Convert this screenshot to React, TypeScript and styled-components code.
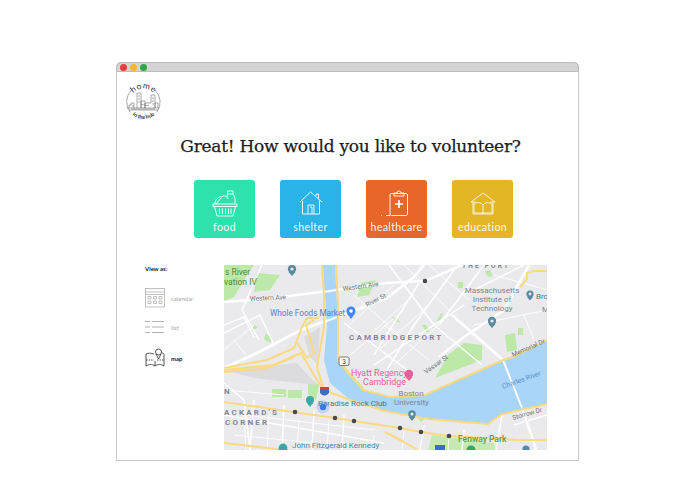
import styled, { createGlobalStyle } from 'styled-components';

const GlobalStyle = createGlobalStyle`
  html, body { margin: 0; padding: 0; background: #fff; }
  body { font-family: "Lato", "Liberation Sans", sans-serif; }
`;

const Page = styled.div`
  width: 695px;
  height: 494px;
  box-sizing: border-box;
  padding: 62px 0 0 116px;
  overflow: hidden;
`;

const BrowserWindow = styled.div`
  width: 463px;
  height: 399px;
  box-sizing: border-box;
  border: 1px solid #c9c9c9;
  border-top: 0;
  border-radius: 5px 5px 0 0;
  display: flex;
  flex-direction: column;
`;

const TitleBar = styled.div`
  height: 8px;
  margin: 0 -1px;
  flex: none;
  background: #d4d4d4;
  border: 1px solid #bdbdbd;
  border-radius: 5px 5px 0 0;
  display: flex;
  align-items: center;
  gap: 3px;
  padding-left: 3px;
`;

const Dot = styled.span<{ $color: string }>`
  width: 7px;
  height: 7px;
  border-radius: 50%;
  background: ${(p) => p.$color};
`;

const LogoWrap = styled.div`
  height: 40px;
  padding: 9px 0 0 8px;
`;

const Title = styled.h1`
  margin: 14px 0 0;
  padding-left: 6px;
  text-align: center;
  font-family: "DejaVu Serif", "Liberation Serif", serif;
  font-weight: 400;
  font-size: 17px;
  letter-spacing: -0.25px;
  -webkit-text-stroke: 0.25px #1c1c1c;
  line-height: 22px;
  color: #1c1c1c;
`;

const Cards = styled.div`
  display: flex;
  margin: 23px 0 0 77px;
  gap: 25px;
`;

const Card = styled.div<{ $bg: string }>`
  width: 61px;
  height: 58px;
  border-radius: 3px;
  background: ${(p) => p.$bg};
  display: flex;
  flex-direction: column;
  align-items: center;
  color: #fff;
  svg { margin-top: 10px; }
`;

const CardLabel = styled.span`
  margin-top: 3px;
  font-size: 10.6px;
  line-height: 14px;
  letter-spacing: 0.35px;
  white-space: nowrap;
  opacity: 0.92;
`;

const Lower = styled.div`
  display: flex;
  margin-top: 27px;
  padding-left: 28px;
`;

const Sidebar = styled.div`
  width: 79px;
  flex: none;
  display: flex;
  flex-direction: column;
`;

const ViewAs = styled.div`
  font-size: 6px;
  line-height: 7px;
  font-weight: 700;
  color: #222;
`;

const ViewOption = styled.div<{ $active?: boolean }>`
  display: flex;
  align-items: center;
  height: 20px;
  gap: 6px;
  font-size: 6px;
  font-weight: ${(p) => (p.$active ? 700 : 400)};
  color: ${(p) => (p.$active ? '#222' : '#a9a9a9')};
  &:nth-child(2) { margin-top: 16px; }
  &:nth-child(3) { margin-top: 9px; }
  &:nth-child(4) { margin-top: 11px; }
  svg { flex: none; }
`;

const MapBox = styled.div`
  width: 323px;
  height: 185px;
  flex: none;
  overflow: hidden;
  svg { display: block; }
`;

const wideRoads = [
  'M0 103 L33 88 L77 65 L113 52 L140 42 L163 33 L190 12 L200 0',
  'M0 37 L50 33 L96 27 L163 18 L201 16 L250 -5',
  'M228 50 L279 95 L298 143 L308 172 L312 185',
  'M305 0 L280 45 L240 72 L215 92',
];

const whiteRoads = [
  'M40 -5 L18 45 L35 75',
  'M0 60 L20 52 L30 72',
  'M165 0 L210 60 L258 100',
  'M120 58 L190 110',
  'M195 18 L150 90',
  'M230 5 L190 60 L160 110',
  'M260 0 L215 60',
  'M240 30 L300 0',
  'M150 100 L240 40',
  'M0 150 L160 178',
  'M30 135 L26 185',
  'M60 140 L58 185',
  'M90 145 L88 185',
  'M120 150 L118 185',
  'M0 118 L20 135 L26 185',
  'M200 160 L196 185',
  'M240 165 L238 185',
  'M278 150 L272 185',
  'M290 160 L323 150',
  'M0 68 L36 50 L50 80',
];

const thinRoads = [
  'M125 60 L170 20', 'M140 75 L190 30', 'M155 85 L205 40', 'M170 100 L220 55',
  'M130 30 L175 70', 'M120 95 L180 45', 'M0 85 L30 60', 'M10 170 L90 178',
  'M10 75 L22 90', 'M20 150 L22 185', 'M45 150 L43 185', 'M75 155 L73 185',
  'M105 155 L103 185', 'M150 170 L148 185', 'M180 165 L178 185', 'M225 170 L224 185',
  'M270 10 L323 25', 'M250 60 L323 45', 'M300 50 L310 75', 'M2 148 L150 165',
  'M180 0 L225 45', 'M205 0 L245 35', 'M0 125 L60 130', 'M160 60 L205 95',
];

const yellowRoads = [
  'M0 137 L69 147 L111 153 L130 156 L176 163 L197 167 L225 171 L262 173 L294 175 L323 175',
  'M161 167 L180 177 L194 185',
  'M161 146 L204 154 L264 159 L278 149 L323 139',
  'M201 130 L279 95 L289 92 L323 75',
  'M0 103 L43 95 L70 83 L78 62 L83 53 L95 53',
  'M0 105 L50 100 L77 88 L93 115 L100 125',
  'M0 107 L40 104 L70 92',
  'M73 78 L83 93 L90 88 L82 60 L90 55',
  'M98 0 L100 30 L100 62 L93 102 L100 125 L126 135 L161 146',
  'M112 0 L114 40 L114 95 L139 125 L166 132 L201 130',
  'M303 14 L303 8 L310 6 L323 6',
  'M296 22 L303 14',
  'M0 178 L60 185',
];

const MapDrawing = () => (
  <svg width="323" height="185" viewBox="0 0 323 185" fontFamily="Roboto, 'Liberation Sans', sans-serif">
    <rect width="323" height="185" fill="#eaeaec" />
    {/* parks */}
    <g fill="#bce8a8">
      <path d="M0 0 H30 L22 12 L10 32 L0 36 Z" />
      <path d="M33 8 L56 10 L46 25 L30 27 Z" />
      <path d="M137 18 L152 15 L145 30 L133 32 Z" />
      <path d="M114 95 L119 100 L139 122 L140 125 L125 115 Z" />
      <path d="M211 113 L224 90 L240 78 L258 80 L258 95 Z" />
      <path d="M281 70 L291 68 L293 85 L283 87 Z" />
      <rect x="294" y="63" width="5" height="7" />
      <rect x="234" y="17" width="5" height="6" />
      <path d="M261 6 L266 5 L269 11 L264 12 Z" />
      <path d="M168 52 L172 52 L176 57 L172 57 Z" />
      <path d="M217 48 L219 49 L215 57 L213 56 Z" />
      <path d="M198 60 L202 60 L206 67 L202 67 Z" />
      <rect x="48" y="124" width="14" height="8" />
      <rect x="64" y="125" width="14" height="8" />
      <path d="M84 112 L95 120 L92 135 L84 130 Z" />
      <path d="M191 150 L203 151 L197 157 Z" />
      <path d="M30 60 L34 62 L28 66 Z" />
      <path d="M42 68 L48 74 L46 78 L40 74 Z" />
      <path d="M114 100 L132 122 L128 122 L114 108 Z" />
      <path d="M208 170 L270 178 L272 185 L204 185 Z" fill="#c6e8b4" />
    </g>
    {/* rail yard */}
    <path d="M0 105 L73 98 L93 120 L30 113 Z M80 72 L96 62 L94 100 L86 92 Z" fill="#dcdcdf" />
    <g fill="none" stroke="#fff" strokeWidth="0.9">
      {thinRoads.map((d) => <path key={d} d={d} />)}
    </g>
    <g fill="none" stroke="#fff" strokeWidth="1.5" strokeLinejoin="round">
      {whiteRoads.map((d) => <path key={d} d={d} />)}
    </g>
    <g fill="none" stroke="#fff" strokeWidth="2.6" strokeLinejoin="round">
      {wideRoads.map((d) => <path key={d} d={d} />)}
    </g>
    {/* water */}
    <path
      d="M99 0 H111 L113 40 L114 95 L122 108 L139 125 L166 132 L201 130 L279 95 L323 75 V139 L278 149 L264 159 L204 154 L161 146 L126 135 L106 118 L100 95 L103 60 L101 30 Z"
      fill="#a8d5f8"
    />
    <path d="M279 95 L298 143" stroke="#fff" strokeWidth="2" fill="none" />
    <path d="M100 27 L112 25" stroke="#fff" strokeWidth="2.2" fill="none" />
    <path d="M100 57 L113 52" stroke="#fff" strokeWidth="2.4" fill="none" />
    <g fill="none" stroke="#f9da80" strokeWidth="2" strokeLinejoin="round">
      {yellowRoads.map((d) => <path key={d} d={d} />)}
    </g>
    {/* route badge */}
    <rect x="115" y="92" width="10" height="8.5" rx="1.5" fill="#fff" stroke="#555" strokeWidth="0.8" />
    <text x="120" y="99" fontSize="6.5" fill="#333" textAnchor="middle">3</text>
    <path d="M96 122 h9 v6 q-4.5 5 -9 0 Z" fill="#3f6cc4" />
    <path d="M96 122 h9 v2 h-9 Z" fill="#c8443c" />
    {/* labels */}
    <g fontSize="8.5" fill="#4f8a3c">
      <text x="1" y="10">s River</text>
      <text x="0" y="20">vation IV</text>
    </g>
    <text x="234" y="177" fontSize="8.5" fontWeight="500" fill="#5f9c45">Fenway Park</text>
    <g fontSize="6.5" fill="#6c7280">
      <text x="26" y="36" transform="rotate(-3 26 36)">Western Ave</text>
      <text x="119" y="26" transform="rotate(-8 119 26)">Western Ave</text>
      <text x="143" y="42" transform="rotate(-27 143 42)">River St</text>
      <text x="202" y="109" transform="rotate(-35 202 109)">Vassar St</text>
      <text x="289" y="92" transform="rotate(-24 289 92)">Memorial Dr</text>
      <text x="289" y="155" transform="rotate(-16 289 155)">Storrow Dr</text>
    </g>
    <text x="46" y="51" fontSize="8.2" fill="#5880c8">Whole Foods Market</text>
    <text x="279" y="124" fontSize="7" fill="#5b8fcb" transform="rotate(-20 279 124)">Charles River</text>
    <g fontSize="8" fontWeight="700" letterSpacing="2.2" fill="#7f8896">
      <text x="125" y="75">CAMBRIDGEPORT</text>
      <text x="0" y="129" letterSpacing="0">N</text>
      <text x="0" y="150">ACKARD'S</text>
      <text x="1" y="160">CORNER</text>
      <text x="238" y="3" fontSize="6.5">THE PORT</text>
    </g>
    <g fontSize="8" fill="#7d8590" textAnchor="middle">
      <text x="268" y="28">Massachusetts</text>
      <text x="268" y="37">Institute of</text>
      <text x="268" y="46">Technology</text>
      <text x="187" y="131">Boston</text>
      <text x="187.5" y="140">University</text>
    </g>
    <g fontSize="8.8" fill="#e8609a">
      <text x="127" y="111">Hyatt Regency</text>
      <text x="139" y="120">Cambridge</text>
    </g>
    <g fontSize="8" fill="#3b7f8f">
      <text x="94" y="141">Paradise Rock Club</text>
      <text x="68" y="183" fill="#3f8a9a">John Fitzgerald Kennedy</text>
    </g>
    <text x="312" y="34" fontSize="8" fill="#3b7f8f">Bro</text>
    <text x="318" y="47" fontSize="8" fill="#7d8590">M</text>
    {/* pins */}
    <g>
      <circle cx="68" cy="4" r="4.2" fill="#5a8aa0" />
      <path d="M64.5 7 L68 11 L71.5 7 Z" fill="#5a8aa0" />
      <circle cx="68" cy="4" r="1.6" fill="#eaeaec" />
      <circle cx="127" cy="46" r="4.6" fill="#4285f4" />
      <path d="M123.4 49 L127 54 L130.6 49 Z" fill="#4285f4" />
      <circle cx="127" cy="46" r="1.8" fill="#fff" />
      <circle cx="306" cy="29" r="3.6" fill="#5a8aa0" />
      <path d="M303 32 L306 35.5 L309 32 Z" fill="#5a8aa0" />
      <circle cx="306" cy="29" r="1.4" fill="#eaeaec" />
      <circle cx="268" cy="56" r="4.2" fill="#5a8aa0" />
      <path d="M264.5 59 L268 63 L271.5 59 Z" fill="#5a8aa0" />
      <circle cx="268" cy="56" r="1.6" fill="#eaeaec" />
      <circle cx="188" cy="149" r="3.8" fill="#5a8aa0" />
      <path d="M184.7 152 L188 156 L191.3 152 Z" fill="#5a8aa0" />
      <circle cx="188" cy="149" r="1.5" fill="#eaeaec" />
      <circle cx="185" cy="109" r="4.2" fill="#e8609a" />
      <path d="M181.5 112 L185 116 L188.5 112 Z" fill="#e8609a" />
      <circle cx="86" cy="135" r="4" fill="#3aa6a6" />
      <path d="M83 138 L86 142 L89 138 Z" fill="#3aa6a6" />
      <circle cx="59" cy="183" r="4.4" fill="#3aa6a6" />
      <circle cx="247" cy="185" r="4.6" fill="#38a85a" />
      <circle cx="302" cy="184" r="3.6" fill="#5a8aa0" />
      <rect x="211" y="180" width="10" height="5" fill="#3f6cc4" />
    </g>
    {/* subway */}
    <g fill="#4a4a4a">
      <circle cx="71" cy="147" r="2.3" />
      <circle cx="111" cy="153" r="2.3" />
      <circle cx="130" cy="156" r="2.3" />
      <circle cx="176" cy="163" r="2.3" />
      <circle cx="197" cy="167" r="2.3" />
      <circle cx="225" cy="171" r="2.3" />
      <circle cx="201" cy="16" r="2.3" />
    </g>
    {/* current location */}
    <circle cx="99" cy="142" r="6.5" fill="#4285f4" opacity="0.22" />
    <circle cx="99" cy="142" r="3.2" fill="#3f78e6" />
  </svg>
);

const Logo = () => (
  <svg width="38" height="40" viewBox="0 0 38 40" fill="none" stroke="#555" strokeWidth="0.5">
    <defs>
      <path id="logoTop" d="M5 21 A13.5 13.5 0 0 1 32 21" />
      <path id="logoBottom" d="M1.5 21 A17 17 0 0 0 35.5 21" />
    </defs>
    <path d="M6.5 9 A17 17 0 0 0 5 31 M30 9 A17 17 0 0 1 32 31" />
    <path d="M4 27 V24 H6 V22 H9 V27 M12 27 V12 H16 V27 M16 27 V20 H20 V27 M20 27 V22 H26 V14 H30 V27 M30 27 V22 H33 V27 M2 27 H34 M4 29 H33 M6 28 H30 M13 15 H15 M13 18 H15 M13 21 H15 M27 17 H29 M27 20 H29 M27 23 H29 M7 25 H9 M16 24 C18 22 20 26 24 24" />
    <text fontFamily="Lato, sans-serif" fontSize="8.5" fill="#333" stroke="none" letterSpacing="0.6" textAnchor="middle">
      <textPath href="#logoTop" startOffset="50%">home</textPath>
    </text>
    <text fontFamily="Lato, sans-serif" fontSize="5.4" fontWeight="700" fill="#333" stroke="none" textAnchor="middle">
      <textPath href="#logoBottom" startOffset="50%">in the hub</textPath>
    </text>
  </svg>
);

const FoodIcon = () => (
  <svg width="26" height="27" viewBox="0 0 26 27" fill="none" stroke="#fff" strokeWidth="0.9" strokeLinejoin="round">
    <path d="M3 14 C3 9 7 6 10 7 C12 5 15 6 16 9 M4 14 L9 8" />
    <path d="M15 7 L15.5 4 V1 H21 V4 L23 8 V13" />
    <path d="M15.5 4 H21" />
    <path d="M1 14 H25 V16.5 H1 Z" />
    <path d="M2.5 16.5 L5 26 H21 L23.5 16.5" />
    <path d="M7.5 18.5 V24 M10.5 18.5 V24 M13.5 18.5 V24 M16.5 18.5 V24 M19 18.5 V24" />
  </svg>
);

const ShelterIcon = () => (
  <svg width="24" height="27" viewBox="0 0 24 27" fill="none" stroke="#fff" strokeWidth="0.9" strokeLinejoin="round">
    <path d="M1 12 L11.5 2 L23 12" />
    <path d="M17 6 V4 H19.5 V8.5" />
    <path d="M3.5 10.5 V24 H20.5 V10.5" />
    <path d="M9 24 V15 H15 V24 M11 17 H13 V24" />
  </svg>
);

const HealthIcon = () => (
  <svg width="34" height="27" viewBox="0 0 34 27" fill="none" stroke="#fff" strokeWidth="0.9" strokeLinejoin="round">
    <path d="M10 5 V24 a1.5 1.5 0 0 0 1.5 1.5 H26 a1.5 1.5 0 0 0 1.5 -1.5 V5 a1.5 1.5 0 0 0 -1.5 -1.5 H11.5 A1.5 1.5 0 0 0 10 5 Z" />
    <path d="M14 6 V3 H17 a2 2 0 0 1 4 0 H24 V6 Z" />
    <path d="M19 10 V18 M15 14 H23" strokeWidth="1.6" />
    <path d="M1 25.5 h0.8 M6 25.5 H10" />
  </svg>
);

const EducationIcon = () => (
  <svg width="26" height="27" viewBox="0 0 26 27" fill="none" stroke="#fff" strokeWidth="0.9" strokeLinejoin="round" opacity="0.9">
    <path d="M1 12 L13 3 L25 12" />
    <path d="M1 12 H6 M20 12 H25" />
    <path d="M3 12 V24 H23 V12" />
    <path d="M4 14 C7 12 11 12 13 15 C15 12 19 12 22 14 V23 H4 Z" />
    <path d="M13 15 V24" />
  </svg>
);

const CalendarIcon = () => (
  <svg width="20" height="20" viewBox="0 0 20 20" fill="none" stroke="#9a9a9a" strokeWidth="0.6">
    <rect x="0.5" y="0.5" width="19" height="18.5" />
    <path d="M0.5 4 H19.5 M0.5 6.5 H19.5" />
    <path d="M3 8.5 h3 v2.5 h-3 Z M8.5 8.5 h3 v2.5 h-3 Z M14 8.5 h3 v2.5 h-3 Z M3 13 h3 v2.5 h-3 Z M8.5 13 h3 v2.5 h-3 Z M14 13 h3 v2.5 h-3 Z" />
  </svg>
);

const ListIcon = () => (
  <svg width="20" height="14" viewBox="0 0 20 14" fill="none" stroke="#8f8f8f" strokeWidth="0.7">
    <path d="M0 1.5 H5 M7 1.5 H19 M0 7 H5 M7 7 H19 M0 12.5 H5 M7 12.5 H19" />
  </svg>
);

const MapIcon = () => (
  <svg width="20" height="20" viewBox="0 0 20 20" fill="none" stroke="#2a2a2a" strokeWidth="0.8" strokeLinejoin="round">
    <path d="M1 6 L1 18 C4 16 7 16 10 18 C13 16 16 16 19 18 V6 C18 5 17.5 5 17 5" />
    <path d="M1 6 C3 5 6 5 9 6 M10 18 V13" />
    <path d="M1 12 H9 M12 12 H19" strokeDasharray="1.5 1" />
    <circle cx="13.5" cy="4" r="3" />
    <path d="M11 6 L13.5 11 L16 6" />
  </svg>
);

const categories = [
  { label: 'food', bg: '#2ee2ae', icon: <FoodIcon /> },
  { label: 'shelter', bg: '#2ab3e6', icon: <ShelterIcon /> },
  { label: 'healthcare', bg: '#e8662a', icon: <HealthIcon /> },
  { label: 'education', bg: '#e3b626', icon: <EducationIcon /> },
];

const App = () => (
  <Page>
    <GlobalStyle />
    <BrowserWindow>
      <TitleBar>
        <Dot $color="#ee3a38" />
        <Dot $color="#f2b632" />
        <Dot $color="#2fa83c" />
      </TitleBar>
      <LogoWrap><Logo /></LogoWrap>
      <Title>Great! How would you like to volunteer?</Title>
      <Cards>
        {categories.map((c) => (
          <Card key={c.label} $bg={c.bg}>
            {c.icon}
            <CardLabel>{c.label}</CardLabel>
          </Card>
        ))}
      </Cards>
      <Lower>
        <Sidebar>
          <ViewAs>View as:</ViewAs>
          <ViewOption><CalendarIcon />calendar</ViewOption>
          <ViewOption><ListIcon />list</ViewOption>
          <ViewOption $active><MapIcon />map</ViewOption>
        </Sidebar>
        <MapBox><MapDrawing /></MapBox>
      </Lower>
    </BrowserWindow>
  </Page>
);

export default App;
